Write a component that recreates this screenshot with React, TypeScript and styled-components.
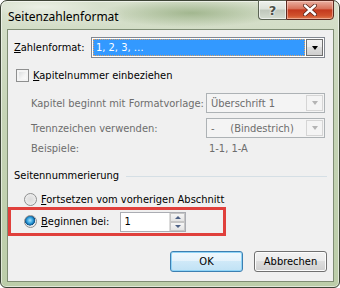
import React from 'react';
import styled, { createGlobalStyle } from 'styled-components';

const GlobalStyle = createGlobalStyle`
   html, body {
      margin: 0;
      padding: 0;
      background: #ffffff;
   }
   * {
      box-sizing: border-box;
   }
`;

const uiFont = `"DejaVu Sans Condensed", "DejaVu Sans", Tahoma, sans-serif`;

const Window = styled.div`
   width: 340px;
   height: 288px;
   border: 1px solid #3d4436;
   border-radius: 7px 7px 6px 6px;
   background:
      radial-gradient(ellipse 90px 14px at 190px 12px, rgba(120, 150, 95, 0.55), transparent),
      radial-gradient(ellipse 60px 10px at 40px 6px, rgba(255, 255, 255, 0.5), transparent),
      linear-gradient(180deg, #d7e0cc 0%, #c6d4b6 40%, #bccda9 100%);
   box-shadow: inset 0 0 0 1px rgba(255, 255, 255, 0.55);
   display: flex;
   flex-direction: column;
   padding: 0 5px 5px 6px;
`;

const TitleBar = styled.div`
   height: 28px;
   display: flex;
   justify-content: space-between;
   align-items: flex-start;
`;

const Title = styled.div`
   font-family: "Noto Sans", "Open Sans", sans-serif;
   font-size: 12px;
   color: #000;
   padding: 7px 0 0 1px;
   text-shadow: 0 0 8px rgba(255, 255, 255, 0.9);
`;

const CaptionButtons = styled.div`
   display: flex;
   margin-top: -1px;
`;

const HelpButton = styled.div`
   width: 28px;
   height: 20px;
   border: 1px solid #5b6454;
   border-right: none;
   border-radius: 0 0 0 4px;
   background: linear-gradient(180deg, #eef1ec 0%, #dde2da 45%, #bfc7bb 50%, #d4dcd0 100%);
   box-shadow: inset 0 0 0 1px rgba(255, 255, 255, 0.6);
   display: flex;
   align-items: center;
   justify-content: center;
   font-family: "DejaVu Sans", sans-serif;
   font-weight: bold;
   font-size: 13px;
   color: #4a4f47;
   text-shadow: 0 0 2px #fff, 0 0 2px #fff;
`;

const CloseButton = styled.div`
   width: 48px;
   height: 20px;
   border: 1px solid #5b2a20;
   border-radius: 0 0 4px 0;
   background: linear-gradient(180deg, #eab0a2 0%, #d8735c 42%, #c4391e 50%, #d0502c 80%, #e07a4e 100%);
   box-shadow: inset 0 0 0 1px rgba(255, 220, 210, 0.5);
   display: flex;
   align-items: center;
   justify-content: center;
`;

const Client = styled.div`
   flex: 1;
   background: #f0f0f0;
   border: 1px solid #7f8d74;
   font-family: ${uiFont};
   font-size: 11px;
   color: #000;
   padding: 7px 6px 0 5px;
   display: flex;
   flex-direction: column;
`;

const Row = styled.div<{ $height: number; $top: number; $indent?: number }>`
   display: flex;
   align-items: center;
   height: ${(p) => p.$height}px;
   margin-top: ${(p) => p.$top}px;
   padding-left: ${(p) => p.$indent ?? 0}px;
`;

const Label = styled.span<{ $width?: number; $disabled?: boolean }>`
   width: ${(p) => (p.$width ? `${p.$width}px` : 'auto')};
   flex: none;
   white-space: nowrap;
   color: ${(p) => (p.$disabled ? '#6d6d6d' : '#000')};
   u {
      text-decoration: underline;
      text-underline-offset: 1px;
   }
`;

const Combo = styled.div<{ $width: number; $height: number; $disabled?: boolean }>`
   width: ${(p) => p.$width}px;
   height: ${(p) => p.$height}px;
   border: 1px solid ${(p) => (p.$disabled ? '#adb2b5' : '#828790')};
   background: ${(p) => (p.$disabled ? '#f4f4f4' : '#fff')};
   display: flex;
   padding: 1px;
`;

const ComboValue = styled.div<{ $selected?: boolean; $disabled?: boolean }>`
   flex: 1;
   display: flex;
   align-items: center;
   padding-left: 3px;
   white-space: pre;
   background: ${(p) => (p.$selected ? '#3399ff' : 'transparent')};
   color: ${(p) => (p.$selected ? '#fff' : p.$disabled ? '#6d6d6d' : '#000')};
   outline: ${(p) => (p.$selected ? '1px dotted #e0a060' : 'none')};
   outline-offset: -1px;
`;

const DropButton = styled.div<{ $disabled?: boolean }>`
   width: 17px;
   flex: none;
   margin-left: 1px;
   border: 1px solid ${(p) => (p.$disabled ? '#d5d5d5' : '#707070')};
   background: ${(p) =>
      p.$disabled
         ? '#f4f4f4'
         : 'linear-gradient(180deg, #f2f2f2 0%, #ebebeb 50%, #dddddd 50%, #cfcfcf 100%)'};
   display: flex;
   align-items: center;
   justify-content: center;
`;

const Arrow = styled.span<{ $disabled?: boolean }>`
   width: 0;
   height: 0;
   border-left: 3.5px solid transparent;
   border-right: 3.5px solid transparent;
   border-top: 4px solid ${(p) => (p.$disabled ? '#b4b4b4' : '#000')};
`;

const CheckBox = styled.span`
   width: 13px;
   height: 13px;
   flex: none;
   border: 1px solid #8e8f8f;
   background: linear-gradient(135deg, #d2d4d6 0%, #f5f5f5 60%, #ffffff 100%);
   box-shadow: inset 0 0 0 2px #f4f4f4;
   margin-right: 4px;
`;

const Radio = styled.span<{ $checked?: boolean }>`
   width: 13px;
   height: 13px;
   flex: none;
   border-radius: 50%;
   border: 1px solid #8e8f8f;
   background: ${(p) =>
      p.$checked
         ? 'radial-gradient(circle at 45% 40%, #a8e4ff 0%, #2b9bd9 35%, #0b4f86 55%, #e2e6ea 60%, #f6f6f6 100%)'
         : 'radial-gradient(circle at 50% 50%, #dcdcdc 0%, #e6e6e6 50%, #fafafa 100%)'};
   margin-right: 4px;
`;

const GroupHeader = styled.div`
   display: flex;
   align-items: center;
   height: 14px;
   margin-top: 13px;
   padding-left: 1px;
   &::after {
      content: '';
      flex: 1;
      height: 1px;
      background: #d5dfe5;
      margin: 2px 0 0 7px;
   }
`;

const Highlight = styled.div`
   margin: 1px 0 0 -5px;
   width: 218px;
   height: 29px;
   border: 3px solid #e0403c;
   display: flex;
   align-items: center;
   padding-left: 13px;
`;

const SpinBox = styled.div`
   width: 66px;
   height: 20px;
   border: 1px solid #abadb3;
   background: #fff;
   display: flex;
   margin-left: 11px;
`;

const SpinValue = styled.div`
   flex: 1;
   display: flex;
   align-items: center;
   padding-left: 3px;
`;

const SpinButtons = styled.div`
   width: 16px;
   display: flex;
   flex-direction: column;
   border-left: 1px solid #dcdcdc;
`;

const SpinButton = styled.div`
   flex: 1;
   border: 1px solid #c6c6c6;
   background: linear-gradient(180deg, #f6f6f6, #e4e4e4);
   display: flex;
   align-items: center;
   justify-content: center;
`;

const SpinArrow = styled.span<{ $up?: boolean }>`
   width: 0;
   height: 0;
   border-left: 3px solid transparent;
   border-right: 3px solid transparent;
   ${(p) => (p.$up ? 'border-bottom: 3px solid #4d6185;' : 'border-top: 3px solid #4d6185;')}
`;

const ButtonBar = styled.div`
   display: flex;
   justify-content: flex-end;
   gap: 11px;
   margin-top: auto;
   margin-bottom: 9px;
`;

const Button = styled.button<{ $default?: boolean }>`
   width: 73px;
   height: 21px;
   padding: 0;
   font-family: ${uiFont};
   font-size: 11px;
   color: #000;
   border-radius: 3px;
   border: 1px solid ${(p) => (p.$default ? '#3c7fb1' : '#707070')};
   background: ${(p) =>
      p.$default
         ? 'linear-gradient(180deg, #f0f8fd 0%, #e3f2fb 50%, #cfe9f8 50%, #c0e2f5 100%)'
         : 'linear-gradient(180deg, #f2f2f2 0%, #ebebeb 50%, #dddddd 50%, #cfcfcf 100%)'};
   box-shadow: inset 0 0 0 1px ${(p) => (p.$default ? '#8fd4f7' : '#fcfcfc')};
`;

export default function App() {
   return (
      <>
         <GlobalStyle />
         <Window>
            <TitleBar>
               <Title>Seitenzahlenformat</Title>
               <CaptionButtons>
                  <HelpButton>?</HelpButton>
                  <CloseButton>
                     <svg width="14" height="12" viewBox="0 0 14 12">
                        <path
                           d="M2 1.5 L12 10.5 M12 1.5 L2 10.5"
                           stroke="#5a2418"
                           strokeWidth="4"
                           strokeLinecap="round"
                        />
                        <path
                           d="M2 1.5 L12 10.5 M12 1.5 L2 10.5"
                           stroke="#ffffff"
                           strokeWidth="2.4"
                           strokeLinecap="round"
                        />
                     </svg>
                  </CloseButton>
               </CaptionButtons>
            </TitleBar>

            <Client>
               <Row $height={21} $top={0} $indent={1}>
                  <Label $width={77}><u>Z</u>ahlenformat:</Label>
                  <Combo $width={234} $height={21}>
                     <ComboValue $selected>1, 2, 3, …</ComboValue>
                     <DropButton>
                        <Arrow />
                     </DropButton>
                  </Combo>
               </Row>

               <Row $height={13} $top={11} $indent={3}>
                  <CheckBox />
                  <Label><u>K</u>apitelnummer einbeziehen</Label>
               </Row>

               <Row $height={20} $top={11} $indent={18}>
                  <Label $width={175} $disabled>Kapitel beginnt mit Formatvorlage:</Label>
                  <Combo $width={119} $height={20} $disabled>
                     <ComboValue $disabled>Überschrift 1</ComboValue>
                     <DropButton $disabled>
                        <Arrow $disabled />
                     </DropButton>
                  </Combo>
               </Row>

               <Row $height={20} $top={5} $indent={18}>
                  <Label $width={175} $disabled>Trennzeichen verwenden:</Label>
                  <Combo $width={119} $height={20} $disabled>
                     <ComboValue $disabled>{'-     (Bindestrich)'}</ComboValue>
                     <DropButton $disabled>
                        <Arrow $disabled />
                     </DropButton>
                  </Combo>
               </Row>

               <Row $height={14} $top={3} $indent={18}>
                  <Label $width={178} $disabled>Beispiele:</Label>
                  <Label $disabled>1-1, 1-A</Label>
               </Row>

               <GroupHeader>Seitennummerierung</GroupHeader>

               <Row $height={14} $top={10} $indent={11}>
                  <Radio />
                  <Label><u>F</u>ortsetzen vom vorherigen Abschnitt</Label>
               </Row>

               <Highlight>
                  <Radio $checked />
                  <Label><u>B</u>eginnen bei:</Label>
                  <SpinBox>
                     <SpinValue>1</SpinValue>
                     <SpinButtons>
                        <SpinButton>
                           <SpinArrow $up />
                        </SpinButton>
                        <SpinButton>
                           <SpinArrow />
                        </SpinButton>
                     </SpinButtons>
                  </SpinBox>
               </Highlight>

               <ButtonBar>
                  <Button $default>OK</Button>
                  <Button>Abbrechen</Button>
               </ButtonBar>
            </Client>
         </Window>
      </>
   );
}
